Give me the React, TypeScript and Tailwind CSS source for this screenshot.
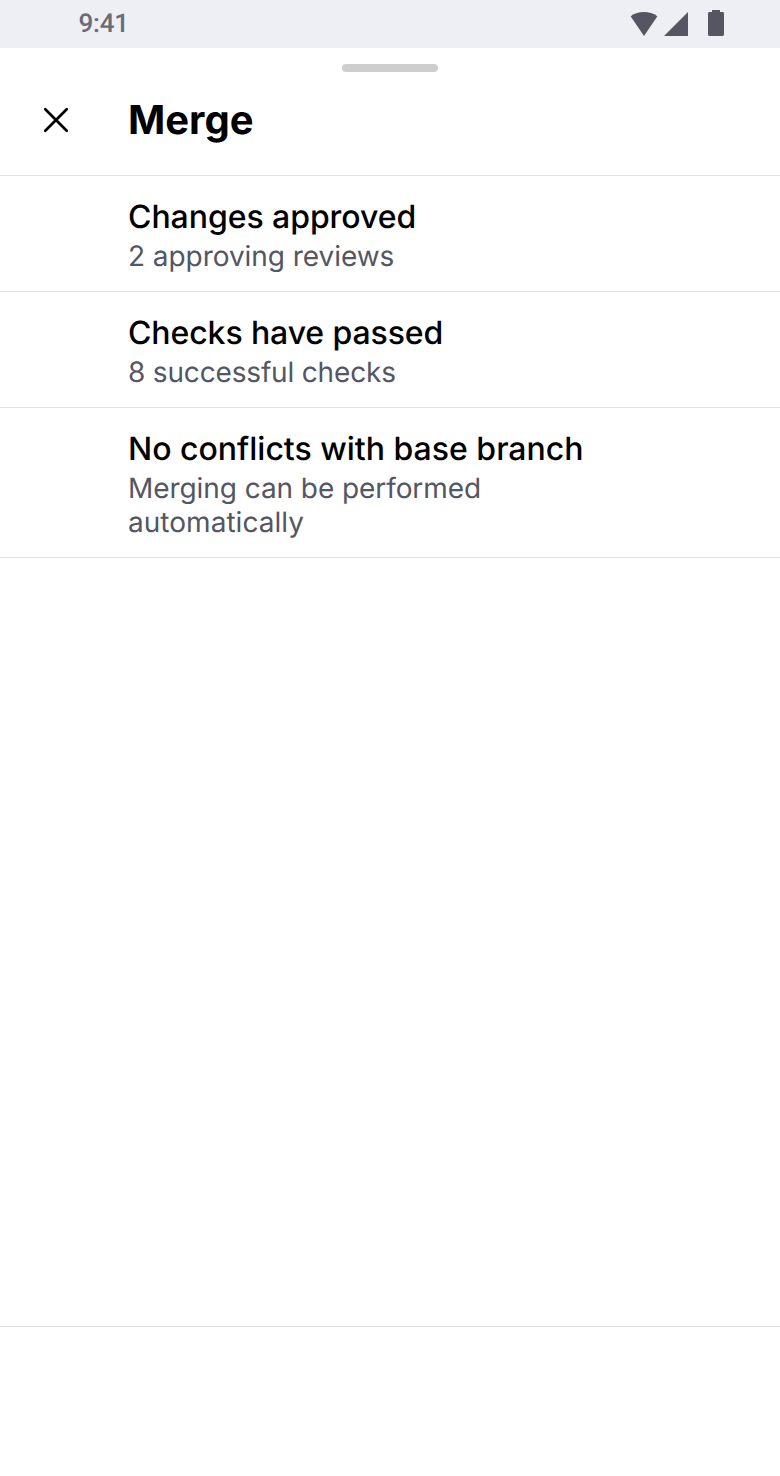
const checks = [
  {
    title: "Changes approved",
    titleStyle: "tracking-[-0.06px]",
    lines: [{ text: "2 approving reviews", style: "tracking-[-0.05px]" }],
  },
  {
    title: "Checks have passed",
    titleStyle: "tracking-[-0.1px]",
    lines: [{ text: "8 successful checks", style: "tracking-[-0.17px]" }],
  },
  {
    title: "No conflicts with base branch",
    titleStyle: "tracking-normal",
    lines: [
      { text: "Merging can be performed", style: "tracking-[-0.07px]" },
      { text: "automatically", style: "tracking-[0.03px]" },
    ],
  },
];

function StatusBar() {
  return (
    <div className="flex h-12 shrink-0 items-center justify-between bg-[#eeeff5] pr-14 pl-[78.5px] text-[#545662]">
      <span className="h-12 font-['Roboto',sans-serif] text-[26px] leading-[48px] font-medium tracking-[-0.2px] text-[#696b76]">9:41</span>
      <svg width="96" height="48" viewBox="628 0 96 48" fill="currentColor" aria-hidden="true">
        <path d="M630.6 16.2C638.5 10.7 649.5 10.7 657.4 16.2L644 36Z" />
        <path d="M664 36L688 12V36Z" />
        <path d="M712 10h8v2h2.6a1.4 1.4 0 0 1 1.4 1.4v21.2a1.4 1.4 0 0 1-1.4 1.4h-13.2a1.4 1.4 0 0 1-1.4-1.4V13.4a1.4 1.4 0 0 1 1.4-1.4H712Z" />
      </svg>
    </div>
  );
}

export default function App() {
  return (
    <div className="flex h-[1476px] w-[780px] flex-col bg-white font-['Inter',sans-serif] text-black [text-rendering:geometricPrecision]">
      <StatusBar />
      <header className="flex h-32 shrink-0 flex-col border-b border-[#e0e0e0]">
        <div className="mt-4 h-2 w-24 self-center rounded-full bg-[#cecece]" />
        <div className="flex h-24 items-center pl-10">
          <button aria-label="Close" className="mr-14 size-8">
            <svg width="32" height="32" viewBox="0 0 32 32" fill="none" stroke="currentColor" strokeWidth="2.7" strokeLinecap="round" aria-hidden="true">
              <path d="M5.3 5.3L26.7 26.7M26.7 5.3L5.3 26.7" />
            </svg>
          </button>
          <h1 className="text-[40px] leading-[48px] font-bold">Merge</h1>
        </div>
      </header>
      <main className="grow">
        {checks.map((check) => (
          <section key={check.title} className="border-b border-[#e0e0e0] pt-5 pb-[18px] pl-32">
            <h2 className={`mb-px text-[32px] leading-[42px] font-medium ${check.titleStyle}`}>{check.title}</h2>
            {check.lines.map((line) => (
              <p key={line.text} className={`text-[28px] leading-[34px] text-[#545662] ${line.style}`}>{line.text}</p>
            ))}
          </section>
        ))}
      </main>
      <footer className="h-[150px] shrink-0 border-t border-[#e0e0e0]" />
    </div>
  );
}
